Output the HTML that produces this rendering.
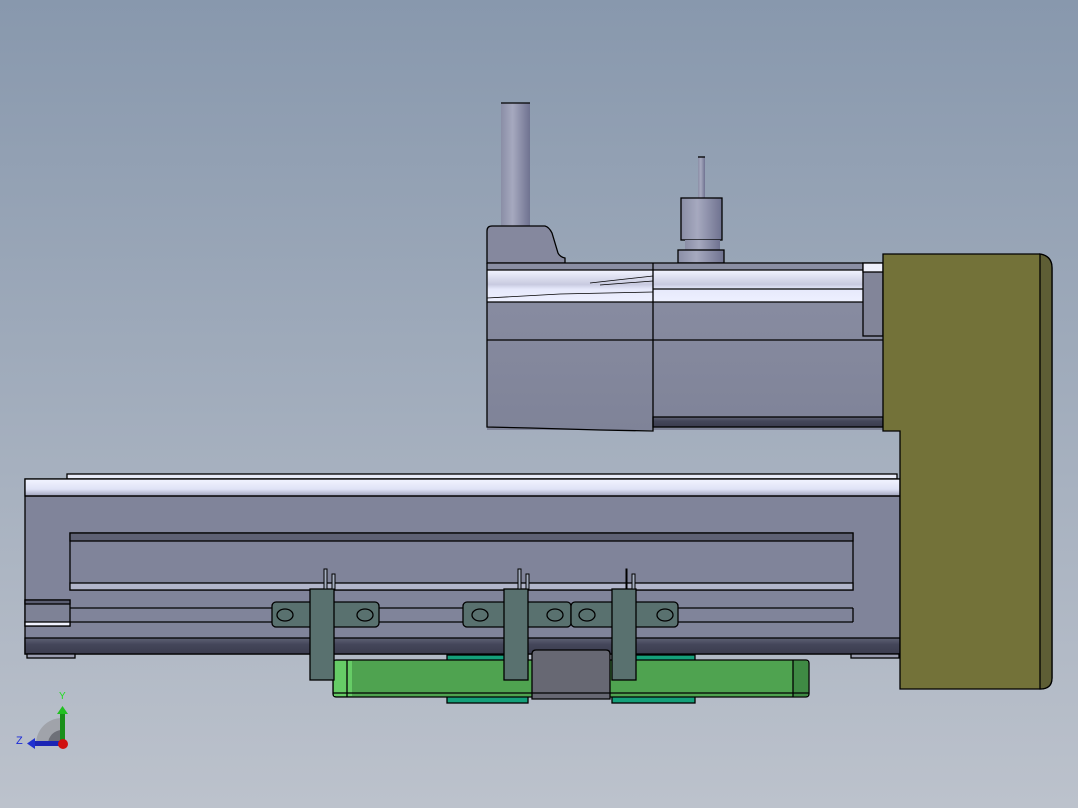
<!DOCTYPE html>
<html><head><style>html,body{margin:0;padding:0;overflow:hidden}</style></head>
<body>
<svg width="1078" height="808" viewBox="0 0 1078 808" xmlns="http://www.w3.org/2000/svg" style="display:block">
<defs>
<linearGradient id="bg" x1="0" y1="0" x2="0" y2="1"><stop offset="0" stop-color="#8898ad"/><stop offset="1" stop-color="#bcc2cc"/></linearGradient>
<linearGradient id="cyl" x1="0" y1="0" x2="1" y2="0"><stop offset="0" stop-color="#8a8ea6"/><stop offset="0.4" stop-color="#a6a9bf"/><stop offset="1" stop-color="#6f7290"/></linearGradient>
<linearGradient id="shine" x1="0" y1="0" x2="0" y2="1"><stop offset="0" stop-color="#f2f4ff"/><stop offset="0.45" stop-color="#c8cae0"/><stop offset="0.6" stop-color="#e6e9fb"/><stop offset="1" stop-color="#eef0ff"/></linearGradient>
<linearGradient id="topband" x1="0" y1="0" x2="0" y2="1"><stop offset="0" stop-color="#f2f4ff"/><stop offset="0.6" stop-color="#dfe2f6"/><stop offset="1" stop-color="#9ea2bb"/></linearGradient>
<linearGradient id="dark" x1="0" y1="0" x2="0" y2="1"><stop offset="0" stop-color="#5f6274"/><stop offset="0.4" stop-color="#44465a"/><stop offset="1" stop-color="#3b3c4e"/></linearGradient>
<linearGradient id="body" x1="0" y1="0" x2="0" y2="1"><stop offset="0" stop-color="#8a8ea3"/><stop offset="1" stop-color="#7f8398"/></linearGradient>
</defs>
<rect width="1078" height="808" fill="url(#bg)"/>

<g stroke="#000" stroke-width="1.3">
<!-- pillar -->
<rect x="501" y="103" width="29" height="124" fill="url(#cyl)" stroke="none"/>
<line x1="501" y1="103" x2="530" y2="103"/>
<!-- connector -->
<rect x="698" y="157" width="7" height="41" fill="url(#cyl)" stroke="none"/>
<line x1="698" y1="157" x2="705" y2="157"/>
<rect x="681" y="198" width="41" height="42" fill="url(#cyl)"/>
<rect x="685" y="240" width="35" height="10" fill="url(#cyl)" stroke="none"/>
<rect x="678" y="250" width="46" height="13" fill="url(#cyl)"/>
<!-- encoder housing -->
<path d="M487 263 L487 231 Q487 226 492 226 L545 226 Q549 227 552 233 L558 253 Q560 257 565 258 L565 263 Z" fill="#85889e"/>

<!-- motor -->
<rect x="487" y="263" width="396" height="167" fill="url(#body)" stroke="none"/>
<rect x="487" y="270" width="376" height="32" fill="url(#shine)" stroke="none"/>
<line x1="487" y1="263" x2="863" y2="263"/>
<line x1="487" y1="270" x2="863" y2="270"/>
<line x1="653" y1="289" x2="863" y2="289"/>
<line x1="487" y1="302" x2="863" y2="302"/>
<path d="M590 283 L653 276 M600 285 L653 281 M487 298 L560 294 L653 292" fill="none" stroke-width="0.8"/>
<line x1="487" y1="340" x2="883" y2="340"/>
<rect x="653" y="417" width="230" height="10" fill="url(#dark)"/>
<path d="M487 263 L487 427 L530 428 L600 430 L653 431 L653 263" fill="none"/>
<rect x="863" y="263" width="20" height="73" fill="#828599"/>
<rect x="863" y="263" width="20" height="9" fill="#eef0fb"/>

<!-- lower axis -->
<rect x="67" y="474" width="830" height="5" fill="#e8ebf8"/>
<rect x="25" y="479" width="875" height="175" fill="#80849a"/>
<rect x="25" y="479" width="875" height="17" fill="url(#topband)"/>
<line x1="25" y1="496" x2="900" y2="496"/>
<rect x="25" y="638" width="875" height="16" fill="url(#dark)"/>
<rect x="70" y="533" width="783" height="57" fill="#80849a"/>
<rect x="70" y="533" width="783" height="8" fill="#5e6174"/>
<rect x="70" y="583" width="783" height="7" fill="#b2b6cb"/>
<line x1="70" y1="608" x2="853" y2="608"/>
<line x1="70" y1="622" x2="853" y2="622"/>
<line x1="853" y1="608" x2="853" y2="622"/>
<rect x="25" y="600" width="45" height="26" fill="#7e8296"/>
<rect x="25" y="600" width="45" height="4" fill="#5a5d70"/>
<rect x="25" y="622" width="45" height="4" fill="#f0f2ff"/>
<rect x="27" y="654" width="48" height="4" fill="#9a9db0"/>
<rect x="851" y="654" width="48" height="4" fill="#9a9db0"/>

<!-- green carriage -->
<rect x="447" y="655" width="81" height="48" fill="#14a07a"/>
<rect x="612" y="655" width="83" height="48" fill="#14a07a"/>
<rect x="333" y="660" width="476" height="37" rx="3" fill="#4fa350"/>
<rect x="334" y="661" width="18" height="35" fill="#66cc66" stroke="none"/>
<rect x="793" y="661" width="15" height="35" fill="#3f8a44" stroke="none"/>
<line x1="347" y1="660" x2="347" y2="697"/>
<line x1="793" y1="660" x2="793" y2="697"/>
<line x1="333" y1="693" x2="809" y2="693"/>
<path d="M532 699 L532 654 Q532 650 536 650 L606 650 Q610 650 610 654 L610 699 Z" fill="#676873"/>
<line x1="532" y1="693" x2="610" y2="693"/>

<!-- clamps -->
<g fill="#59716f">
<rect x="272" y="602" width="107" height="25" rx="4"/>
<rect x="463" y="602" width="108" height="25" rx="4"/>
<rect x="571" y="602" width="107" height="25" rx="4"/>
</g>
<g fill="none">
<ellipse cx="285" cy="615" rx="8" ry="6"/><ellipse cx="365" cy="615" rx="8" ry="6"/>
<ellipse cx="480" cy="615" rx="8" ry="6"/><ellipse cx="555" cy="615" rx="8" ry="6"/>
<ellipse cx="587" cy="615" rx="8" ry="6"/><ellipse cx="665" cy="615" rx="8" ry="6"/>
</g>
<g fill="#59716f">
<rect x="310" y="589" width="24" height="91"/>
<rect x="504" y="589" width="24" height="91"/>
<rect x="612" y="589" width="24" height="91"/>
</g>
<g fill="#a5aec0" stroke-width="1">
<rect x="324" y="569" width="3" height="20"/><rect x="332" y="574" width="3" height="15"/>
<rect x="502" y="569" width="3" height="20" transform="translate(16 0)"/><rect x="526" y="574" width="3" height="15"/>
<rect x="626" y="569" width="1" height="20"/><rect x="632" y="574" width="3" height="15"/>
</g>

<!-- olive plate -->
<path d="M883 254 L1040 254 Q1052 256 1052 268 L1052 678 Q1052 689 1040 689 L900 689 L900 431 L883 431 Z" fill="#737239"/>
<path d="M1040 254 Q1052 256 1052 268 L1052 678 Q1052 689 1040 689 Z" fill="#5e5e35"/>
</g>

<!-- triad -->
<path d="M36 744 A26 26 0 0 1 62 718 L62 744 Z" fill="#a0a3aa"/>
<path d="M48 744 A14 14 0 0 1 62 730 L62 744 Z" fill="#6e7078"/>
<rect x="60" y="712" width="5" height="32" fill="#1a8f1a"/>
<path d="M57 714 L62.5 706 L68 714 Z" fill="#22c022"/>
<rect x="33" y="741" width="28" height="5" fill="#1c25b5"/>
<path d="M35 738 L27 743.5 L35 749 Z" fill="#2030d0"/>
<circle cx="63" cy="744" r="5" fill="#d01010"/>
<text x="59" y="699" font-family="Liberation Sans, sans-serif" font-size="10" fill="#22dd22">Y</text>
<text x="16" y="744" font-family="Liberation Sans, sans-serif" font-size="11" fill="#1a2ad8">Z</text>
</svg>
</body></html>
